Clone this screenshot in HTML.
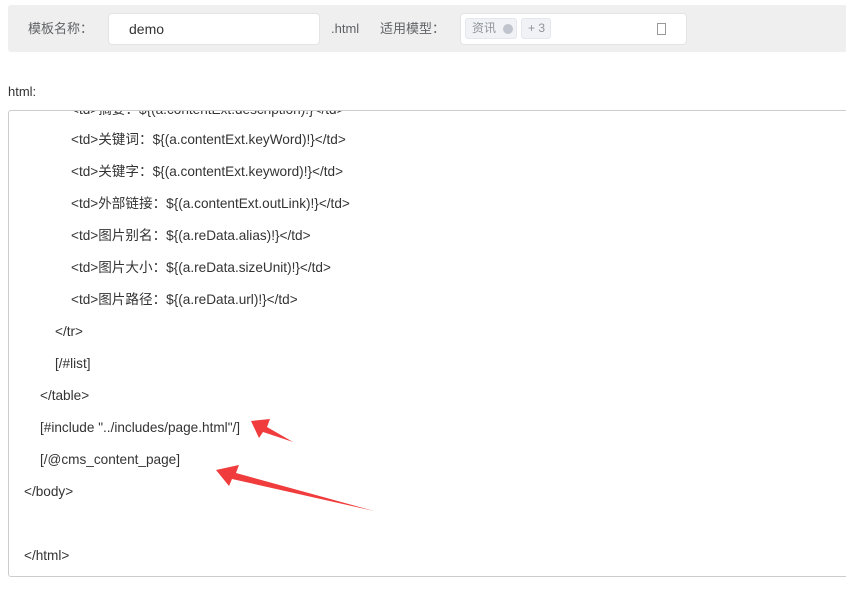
<!DOCTYPE html>
<html><head><meta charset="utf-8"><style>
body{margin:0;width:846px;height:591px;background:#fff;font-family:"Liberation Sans","Noto Sans CJK SC",sans-serif;position:relative;overflow:hidden;color:#333}
.bar{position:absolute;left:8px;top:5px;width:850px;height:47px;background:#efefef;border-radius:3px}
.t{position:absolute;font-size:13px;line-height:16px;white-space:pre}
.inp{position:absolute;background:#fff;border:1px solid #e4e4e4;border-radius:4px}
.tag{position:absolute;background:#f0f2f5;border:1px solid #e4e7ed;border-radius:3px;font-size:12px;line-height:14px;color:#909399}
.code{position:absolute;left:8px;top:110px;width:850px;height:465px;border:1px solid #ccc;border-radius:3px;overflow:hidden}
.l{position:absolute;font-size:13.6px;line-height:16px;color:#333;white-space:pre}
</style></head><body>
<div class="bar"></div>
<div class="t" style="left:28px;top:21px;color:#606266">模板名称：</div>
<div class="inp" style="left:108px;top:13px;width:210px;height:30px"></div>
<div class="t" style="left:129px;top:21px;color:#333;font-size:14px">demo</div>
<div class="t" style="left:331px;top:21px;color:#606266">.html</div>
<div class="t" style="left:380px;top:21px;color:#606266">适用模型：</div>
<div class="inp" style="left:460px;top:13px;width:225px;height:30px"></div>
<div class="tag" style="left:465px;top:18px;width:50px;height:19px"><span style="position:absolute;left:6px;top:2px">资讯</span><span style="position:absolute;left:37px;top:5px;width:10px;height:10px;border-radius:50%;background:#c0c4cc"></span></div>
<div class="tag" style="left:521px;top:18px;width:28px;height:19px"><span style="position:absolute;left:6px;top:2px">+ 3</span></div>
<div style="position:absolute;left:657px;top:23px;width:7px;height:10px;border:1px solid #999"></div>
<div class="t" style="left:8px;top:84px;color:#333">html:</div>
<div class="code">
<div class="l" style="left:62px;top:-9px">&lt;td&gt;摘要：${(a.contentExt.description)!}&lt;/td&gt;</div>
<div class="l" style="left:62px;top:21px">&lt;td&gt;关键词：${(a.contentExt.keyWord)!}&lt;/td&gt;</div>
<div class="l" style="left:62px;top:53px">&lt;td&gt;关键字：${(a.contentExt.keyword)!}&lt;/td&gt;</div>
<div class="l" style="left:62px;top:85px">&lt;td&gt;外部链接：${(a.contentExt.outLink)!}&lt;/td&gt;</div>
<div class="l" style="left:62px;top:117px">&lt;td&gt;图片别名：${(a.reData.alias)!}&lt;/td&gt;</div>
<div class="l" style="left:62px;top:149px">&lt;td&gt;图片大小：${(a.reData.sizeUnit)!}&lt;/td&gt;</div>
<div class="l" style="left:62px;top:181px">&lt;td&gt;图片路径：${(a.reData.url)!}&lt;/td&gt;</div>
<div class="l" style="left:46px;top:213px">&lt;/tr&gt;</div>
<div class="l" style="left:46px;top:245px">[/#list]</div>
<div class="l" style="left:31px;top:277px">&lt;/table&gt;</div>
<div class="l" style="left:31px;top:309px">[#include "../includes/page.html"/]</div>
<div class="l" style="left:31px;top:341px">[/@cms_content_page]</div>
<div class="l" style="left:15px;top:373px">&lt;/body&gt;</div>
<div class="l" style="left:15px;top:437px">&lt;/html&gt;</div>
</div>
<svg style="position:absolute;left:0;top:0" width="846" height="591">
<polygon points="251,421 270,419 267,427 293,442 263,432 259,438" fill="#f03c3c"/>
<polygon points="216,470 239,465 236,473 374,511 232,479 229,486" fill="#f03c3c"/>
</svg>
</body></html>
